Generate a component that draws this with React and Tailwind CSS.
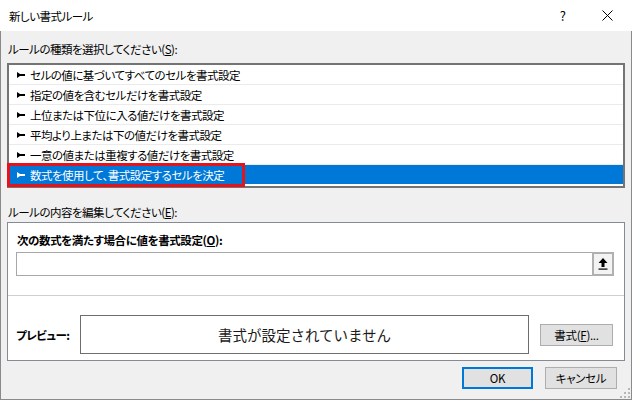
import React from 'react';

const rules = [
  'セルの値に基づいてすべてのセルを書式設定',
  '指定の値を含むセルだけを書式設定',
  '上位または下位に入る値だけを書式設定',
  '平均より上または下の値だけを書式設定',
  '一意の値または重複する値だけを書式設定',
  '数式を使用して、書式設定するセルを決定',
];

const Pointer = ({ color }) => (
  <svg width="8" height="6" viewBox="0 0 8 6" className="shrink-0">
    <path d="M0 0 L3 2 L8 2 L8 4 L3 4 L0 6 Z" fill={color} />
  </svg>
);

const Btn = ({ children, primary, className = '' }) => (
  <div
    className={
      'h-[22px] flex items-center justify-center bg-[#e1e1e1] text-[11.5px] tracking-[-0.3px] leading-[16px] text-black ' +
      (primary ? 'border-2 border-[#0078d7] ' : 'border border-[#adadad] ') +
      className
    }
  >
    {children}
  </div>
);

const App = () => {
  return (
    <div className="w-[632px] h-[400px] flex flex-col bg-[#f0f0f0] text-black font-['Noto_Sans_CJK_JP','Noto_Sans',sans-serif] [font-feature-settings:'palt'] overflow-hidden">
      {/* タイトルバー */}
      <div className="h-[31px] shrink-0 bg-white flex items-center">
        <span className="pl-[9px] text-[11.5px] tracking-[-0.5px] leading-[16px]">新しい書式ルール</span>
        <span className="ml-auto text-[13px] leading-[16px]">?</span>
        <svg width="11" height="11" viewBox="0 0 11 11" className="ml-[36px] mr-[19px]">
          <path d="M0.5 0.5 L10.5 10.5 M10.5 0.5 L0.5 10.5" stroke="#000" strokeWidth="1" />
        </svg>
      </div>

      {/* 本体 */}
      <div className="relative flex-1 flex flex-col border-x border-b border-[#8a8a8a] px-[6px]">
        <div className="pt-[10px] pl-[1px] text-[11.5px] tracking-[-0.5px] leading-[16px]">
          ルールの種類を選択してください(<span className="underline">S</span>):
        </div>

        <div className="relative mt-[6px] h-[125px] border-2 border-[#747474] bg-white">
          {rules.map((r, i) => {
            const sel = i === rules.length - 1;
            return (
              <div
                key={r}
                className={
                  sel
                    ? 'h-[19px] flex items-center pl-[8px] bg-[#0078d7] text-white'
                    : 'h-[20px] flex items-center pl-[8px] border-b border-[#ebebeb]'
                }
              >
                <Pointer color={sel ? '#fff' : '#000'} />
                <span className="ml-[5px] text-[11.5px] tracking-[-0.5px] leading-[16px] whitespace-nowrap">{r}</span>
              </div>
            );
          })}
          {/* 強調枠 */}
          <div className="absolute left-[-2px] top-[98px] w-[238px] h-[24px] border-[3px] border-[#e3141b]" />
        </div>

        <div className="mt-[16px] pl-[1px] text-[11.5px] tracking-[-0.5px] leading-[16px]">
          ルールの内容を編集してください(<span className="underline">E</span>):
        </div>

        <div className="mt-[2px] h-[139px] border border-[#868a94] bg-white flex flex-col">
          <div className="pt-[9px] pl-[9px] text-[11.5px] tracking-[-0.4px] leading-[16px] font-bold">
            次の数式を満たす場合に値を書式設定(<span className="underline">O</span>):
          </div>
          <div className="mt-[4px] ml-[8px] mr-[10px] h-[24px] flex">
            <div className="flex-1 border border-r-0 border-[#a8a8a8] bg-white" />
            <div className="w-[22px] border-2 border-[#b0b0b0] bg-[#f3f3f3] flex items-center justify-center">
              <svg width="10" height="12" viewBox="0 0 10 12">
                <path d="M5 0 L9.5 5 L6.5 5 L6.5 9 L3.5 9 L3.5 5 L0.5 5 Z" fill="#000" />
                <rect x="0.5" y="10.5" width="9" height="1.2" fill="#000" />
              </svg>
            </div>
          </div>
          <div className="mt-[19px] h-px bg-[#cfcfcf]" />
          <div className="mt-[19px] flex items-center pl-[8px] pr-[10px]">
            <div className="w-[64px] text-[11.5px] tracking-[-0.5px] leading-[16px] font-bold">プレビュー:</div>
            <div className="w-[449px] h-[39px] border border-[#6e6e6e] flex items-center justify-center text-[14.5px] leading-[18px] [font-feature-settings:normal] text-[#1a1a1a]">
              書式が設定されていません
            </div>
            <Btn className="ml-[11px] w-[73px]">
              書式(<span className="underline">F</span>)...
            </Btn>
          </div>
        </div>

        <div className="mt-[6px] flex justify-end pr-[8px] gap-[12px]">
          <Btn primary className="w-[71px]">OK</Btn>
          <Btn className="w-[72px]">キャンセル</Btn>
        </div>

        {/* サイズグリップ */}
        <svg width="10" height="10" viewBox="0 0 10 10" className="absolute right-[1px] bottom-[1px]">
          <g fill="#b8b8b8">
            <rect x="8" y="0" width="2" height="2" />
            <rect x="4" y="4" width="2" height="2" />
            <rect x="8" y="4" width="2" height="2" />
            <rect x="0" y="8" width="2" height="2" />
            <rect x="4" y="8" width="2" height="2" />
            <rect x="8" y="8" width="2" height="2" />
          </g>
        </svg>
      </div>
    </div>
  );
};

export default App;
